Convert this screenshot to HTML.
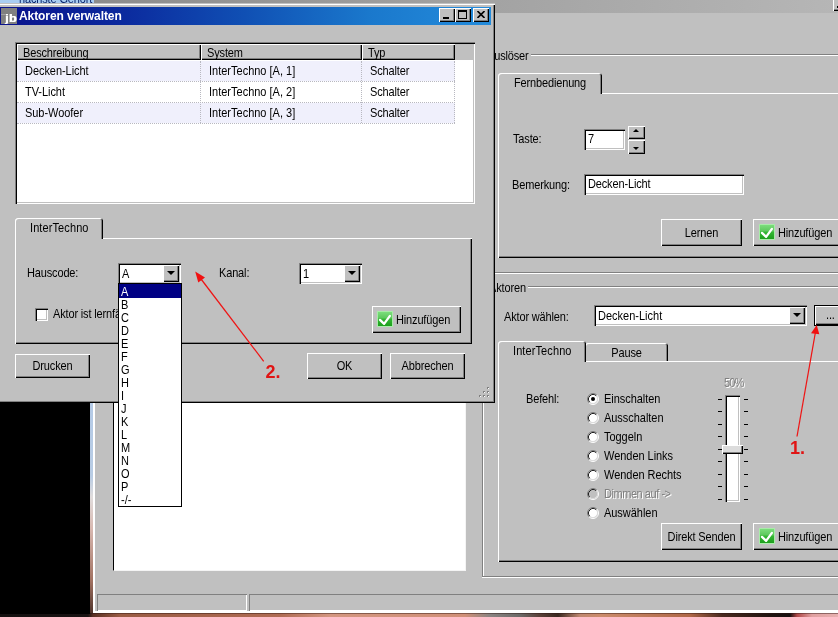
<!DOCTYPE html>
<html lang="de">
<head>
<meta charset="utf-8">
<title>Aktoren verwalten</title>
<style>
html,body{margin:0;padding:0}
body{width:838px;height:617px;position:relative;overflow:hidden;background:#c0c0c0;
 font-family:"Liberation Sans",sans-serif;font-size:11px;color:#000;line-height:13px}
#root{will-change:transform;position:absolute;left:0;top:0;width:838px;height:617px;overflow:hidden;background:#c0c0c0}
.a{position:absolute;box-sizing:border-box}
.t{position:absolute;white-space:nowrap;line-height:13px;height:13px;letter-spacing:-0.15px;transform:scaleY(1.12);transform-origin:0 2.4px}
.btn{position:absolute;box-sizing:border-box;background:#c0c0c0;
 box-shadow:inset 1px 1px 0 #fff,inset -1px -1px 0 #000,inset -2px -2px 0 #808080;}
.btn .t{left:0;right:0;text-align:center}
.sunk{position:absolute;box-sizing:border-box;background:#fff;
 box-shadow:inset 1px 1px 0 #808080,inset 2px 2px 0 #000,inset -1px -1px 0 #fff,inset -2px -2px 0 #c0c0c0;}
.hl{position:absolute;height:2px;border-top:1px solid #808080;border-bottom:1px solid #fff;box-sizing:border-box}
.vl{position:absolute;width:2px;border-left:1px solid #808080;border-right:1px solid #fff;box-sizing:border-box}
.dis{color:#808080;text-shadow:1px 1px 0 #fff}
.rad{position:absolute;box-sizing:border-box;width:12px;height:12px;border-radius:50%;background:#fff;
 border:1px solid;border-color:#808080 #fff #fff #808080;box-shadow:inset 1px 1px 0 #000}
.rad.d{background:#c0c0c0}
.dot{position:absolute;left:3px;top:3px;width:4px;height:4px;border-radius:50%;background:#000}
.tick{position:absolute;height:1px;width:4px;background:#000}
.arr{position:absolute;width:0;height:0;border-left:4px solid transparent;border-right:4px solid transparent;border-top:4px solid #000}
.arrup{position:absolute;width:0;height:0;border-left:3px solid transparent;border-right:3px solid transparent;border-bottom:3px solid #000}
.arrdn{position:absolute;width:0;height:0;border-left:3px solid transparent;border-right:3px solid transparent;border-top:3px solid #000}
.chk{position:absolute;width:16px;height:16px}
.tab{position:absolute;box-sizing:border-box;background:#c0c0c0;border-radius:3px 3px 0 0;
 box-shadow:inset 1px 1px 0 #fff,inset -1px 0 0 #000,inset -2px 0 0 #808080}
.li{position:absolute;left:0;right:0;height:13px;line-height:13px;padding-left:2px;font-size:11px}
.li span{display:inline-block;transform:scaleY(1.12);transform-origin:0 2.4px}
</style>
</head>
<body>
<div id="root">

<!-- ===== background main window ===== -->
<div class="a" id="bgtitle" style="left:94px;top:0;width:744px;height:13px;background:linear-gradient(90deg,#8c8c8c 0%,#a3a3a3 54%,#adadad 78%,#b6b6b6 100%)"></div>
<div class="a" style="left:0;top:0;width:94px;height:3px;background:#a9cdf1;overflow:hidden">
  <div class="t" style="left:19px;top:-8px;font-size:11px;color:#0a246a">nächste Gehört</div>
</div>
<div class="btn" style="left:833px;top:-3px;width:16px;height:14px"><div class="a" style="left:4px;top:9px;width:6px;height:2px;background:#000"></div></div>

<!-- group Auslöser -->
<div class="hl" style="left:482px;top:54px;width:360px"></div>
<div class="t" style="left:486px;top:49px;background:#c0c0c0;padding:0 2px 0 1px">Auslöser</div>
<div class="hl" style="left:482px;top:272px;width:360px"></div>

<!-- Tab Fernbedienung -->
<div class="a" style="left:498px;top:93px;width:350px;height:165px;background:#c0c0c0;box-shadow:inset 1px 1px 0 #fff,inset 0 -1px 0 #000,inset 0 -2px 0 #808080"></div>
<div class="tab" style="left:498px;top:73px;width:104px;height:21px"><div class="t" style="left:16px;top:3px">Fernbedienung</div></div>

<div class="t" style="left:513px;top:132px">Taste:</div>
<div class="sunk" style="left:584px;top:129px;width:41px;height:21px"><div class="t" style="left:4px;top:3px">7</div></div>
<div class="btn" style="left:628px;top:126px;width:17px;height:13px"><div class="arrup" style="left:5px;top:3px"></div></div>
<div class="btn" style="left:628px;top:140px;width:17px;height:14px"><div class="arrdn" style="left:5px;top:7px"></div></div>

<div class="t" style="left:512px;top:178px">Bemerkung:</div>
<div class="sunk" style="left:584px;top:174px;width:160px;height:21px"><div class="t" style="left:4px;top:3px">Decken-Licht</div></div>

<div class="btn" style="left:661px;top:219px;width:81px;height:27px"><div class="t" style="top:7px">Lernen</div></div>
<div class="btn" style="left:753px;top:219px;width:90px;height:27px">
  <svg class="chk" style="left:6px;top:5px" viewBox="0 0 16 16"><rect x="0.5" y="0.5" width="15" height="15" fill="url(#gg)" stroke="#a8eca8"/><rect x="1" y="1" width="14" height="6.5" fill="#fff" opacity="0.18"/><path d="M3 8.9 L7.1 12.9 L12.9 4.9" fill="none" stroke="#fff" stroke-width="2.3" stroke-linecap="round" stroke-linejoin="round"/></svg>
  <div class="t" style="left:25px;top:7px;text-align:left">Hinzufügen</div></div>

<!-- group Aktoren -->
<div class="hl" style="left:482px;top:286px;width:360px"></div>
<div class="vl" style="left:482px;top:286px;height:291px"></div>
<div class="t" style="left:488px;top:281px;background:#c0c0c0;padding:0 2px 0 1px">Aktoren</div>
<div class="hl" style="left:482px;top:576px;width:360px"></div>

<div class="t" style="left:504px;top:310px">Aktor wählen:</div>
<div class="sunk" style="left:594px;top:305px;width:213px;height:21px"><div class="t" style="left:4px;top:4px;letter-spacing:0">Decken-Licht</div>
  <div class="btn" style="left:195px;top:2px;width:16px;height:17px"><div class="arr" style="left:4px;top:6px"></div></div></div>
<div class="a" style="left:814px;top:305px;width:30px;height:21px;background:#000"></div>
<div class="btn" style="left:815px;top:306px;width:30px;height:19px"><div class="t" style="left:11px;top:2px;text-align:left">...</div></div>

<!-- Tab InterTechno / Pause (right) -->
<div class="a" style="left:498px;top:361px;width:350px;height:201px;background:#c0c0c0;box-shadow:inset 1px 1px 0 #fff,inset 0 -1px 0 #000,inset 0 -2px 0 #808080"></div>
<div class="tab" style="left:585px;top:343px;width:83px;height:18px"><div class="t" style="top:3px;left:0;right:0;text-align:center">Pause</div></div>
<div class="tab" style="left:498px;top:341px;width:88px;height:21px"><div class="t" style="left:15px;top:3px;letter-spacing:0.1px">InterTechno</div></div>

<div class="t" style="left:526px;top:392px">Befehl:</div>
<svg class="a" style="left:587px;top:393px" width="12" height="12" viewBox="0 0 12 12"><circle cx="6" cy="6" r="4.6" fill="#fff"/><path d="M2.11 9.89 A5.5 5.5 0 0 1 9.89 2.11" stroke="#808080" fill="none"/><path d="M2.82 9.18 A4.5 4.5 0 0 1 9.18 2.82" stroke="#202020" fill="none"/><path d="M9.89 2.11 A5.5 5.5 0 0 1 2.11 9.89" stroke="#fff" fill="none"/><path d="M9.18 2.82 A4.5 4.5 0 0 1 2.82 9.18" stroke="#dcdcdc" fill="none"/><circle cx="6" cy="6" r="2" fill="#000"/></svg><div class="t" style="left:604px;top:392px;letter-spacing:-0.04px">Einschalten</div>
<svg class="a" style="left:587px;top:412px" width="12" height="12" viewBox="0 0 12 12"><circle cx="6" cy="6" r="4.6" fill="#fff"/><path d="M2.11 9.89 A5.5 5.5 0 0 1 9.89 2.11" stroke="#808080" fill="none"/><path d="M2.82 9.18 A4.5 4.5 0 0 1 9.18 2.82" stroke="#202020" fill="none"/><path d="M9.89 2.11 A5.5 5.5 0 0 1 2.11 9.89" stroke="#fff" fill="none"/><path d="M9.18 2.82 A4.5 4.5 0 0 1 2.82 9.18" stroke="#dcdcdc" fill="none"/></svg><div class="t" style="left:604px;top:411px;letter-spacing:-0.04px">Ausschalten</div>
<svg class="a" style="left:587px;top:431px" width="12" height="12" viewBox="0 0 12 12"><circle cx="6" cy="6" r="4.6" fill="#fff"/><path d="M2.11 9.89 A5.5 5.5 0 0 1 9.89 2.11" stroke="#808080" fill="none"/><path d="M2.82 9.18 A4.5 4.5 0 0 1 9.18 2.82" stroke="#202020" fill="none"/><path d="M9.89 2.11 A5.5 5.5 0 0 1 2.11 9.89" stroke="#fff" fill="none"/><path d="M9.18 2.82 A4.5 4.5 0 0 1 2.82 9.18" stroke="#dcdcdc" fill="none"/></svg><div class="t" style="left:604px;top:430px;letter-spacing:-0.04px">Toggeln</div>
<svg class="a" style="left:587px;top:450px" width="12" height="12" viewBox="0 0 12 12"><circle cx="6" cy="6" r="4.6" fill="#fff"/><path d="M2.11 9.89 A5.5 5.5 0 0 1 9.89 2.11" stroke="#808080" fill="none"/><path d="M2.82 9.18 A4.5 4.5 0 0 1 9.18 2.82" stroke="#202020" fill="none"/><path d="M9.89 2.11 A5.5 5.5 0 0 1 2.11 9.89" stroke="#fff" fill="none"/><path d="M9.18 2.82 A4.5 4.5 0 0 1 2.82 9.18" stroke="#dcdcdc" fill="none"/></svg><div class="t" style="left:604px;top:449px;letter-spacing:-0.04px">Wenden Links</div>
<svg class="a" style="left:587px;top:469px" width="12" height="12" viewBox="0 0 12 12"><circle cx="6" cy="6" r="4.6" fill="#fff"/><path d="M2.11 9.89 A5.5 5.5 0 0 1 9.89 2.11" stroke="#808080" fill="none"/><path d="M2.82 9.18 A4.5 4.5 0 0 1 9.18 2.82" stroke="#202020" fill="none"/><path d="M9.89 2.11 A5.5 5.5 0 0 1 2.11 9.89" stroke="#fff" fill="none"/><path d="M9.18 2.82 A4.5 4.5 0 0 1 2.82 9.18" stroke="#dcdcdc" fill="none"/></svg><div class="t" style="left:604px;top:468px;letter-spacing:-0.04px">Wenden Rechts</div>
<svg class="a" style="left:587px;top:488px" width="12" height="12" viewBox="0 0 12 12"><circle cx="6" cy="6" r="4.6" fill="#c0c0c0"/><path d="M2.11 9.89 A5.5 5.5 0 0 1 9.89 2.11" stroke="#808080" fill="none"/><path d="M2.82 9.18 A4.5 4.5 0 0 1 9.18 2.82" stroke="#202020" fill="none"/><path d="M9.89 2.11 A5.5 5.5 0 0 1 2.11 9.89" stroke="#fff" fill="none"/><path d="M9.18 2.82 A4.5 4.5 0 0 1 2.82 9.18" stroke="#dcdcdc" fill="none"/></svg><div class="t dis" style="left:604px;top:487px;letter-spacing:-0.45px">Dimmen auf -&gt;</div>
<svg class="a" style="left:587px;top:507px" width="12" height="12" viewBox="0 0 12 12"><circle cx="6" cy="6" r="4.6" fill="#fff"/><path d="M2.11 9.89 A5.5 5.5 0 0 1 9.89 2.11" stroke="#808080" fill="none"/><path d="M2.82 9.18 A4.5 4.5 0 0 1 9.18 2.82" stroke="#202020" fill="none"/><path d="M9.89 2.11 A5.5 5.5 0 0 1 2.11 9.89" stroke="#fff" fill="none"/><path d="M9.18 2.82 A4.5 4.5 0 0 1 2.82 9.18" stroke="#dcdcdc" fill="none"/></svg><div class="t" style="left:604px;top:506px;letter-spacing:-0.04px">Auswählen</div>

<div class="t dis" style="left:724px;top:376px;letter-spacing:-0.9px">50%</div>
<div class="sunk" style="left:725px;top:395px;width:15px;height:107px"></div>
<div class="btn" style="left:722px;top:445px;width:21px;height:9px;background:#dcdcdc"></div>
<div class="tick" style="left:718px;top:399px"></div><div class="tick" style="left:744px;top:399px"></div><div class="tick" style="left:718px;top:411px"></div><div class="tick" style="left:744px;top:411px"></div><div class="tick" style="left:718px;top:424px"></div><div class="tick" style="left:744px;top:424px"></div><div class="tick" style="left:718px;top:436px"></div><div class="tick" style="left:744px;top:436px"></div><div class="tick" style="left:718px;top:449px"></div><div class="tick" style="left:744px;top:449px"></div><div class="tick" style="left:718px;top:461px"></div><div class="tick" style="left:744px;top:461px"></div><div class="tick" style="left:718px;top:474px"></div><div class="tick" style="left:744px;top:474px"></div><div class="tick" style="left:718px;top:486px"></div><div class="tick" style="left:744px;top:486px"></div><div class="tick" style="left:718px;top:499px"></div><div class="tick" style="left:744px;top:499px"></div>

<div class="btn" style="left:661px;top:523px;width:81px;height:27px"><div class="t" style="top:7px">Direkt Senden</div></div>
<div class="btn" style="left:753px;top:523px;width:90px;height:27px">
  <svg class="chk" style="left:6px;top:5px" viewBox="0 0 16 16"><rect x="0.5" y="0.5" width="15" height="15" fill="url(#gg)" stroke="#a8eca8"/><rect x="1" y="1" width="14" height="6.5" fill="#fff" opacity="0.18"/><path d="M3 8.9 L7.1 12.9 L12.9 4.9" fill="none" stroke="#fff" stroke-width="2.3" stroke-linecap="round" stroke-linejoin="round"/></svg>
  <div class="t" style="left:25px;top:7px;text-align:left">Hinzufügen</div></div>

<!-- left white client area, status bar, bottom -->
<div class="a" style="left:113px;top:380px;width:353px;height:191px;background:#fff;border-left:1px solid #000;border-right:1px solid #f4f4f4;border-bottom:1px solid #f4f4f4"></div>
<div class="a" style="left:97px;top:594px;width:150px;height:17px;box-shadow:inset 1px 1px 0 #808080,inset -1px -1px 0 #fff"></div>
<div class="a" style="left:249px;top:594px;width:600px;height:17px;box-shadow:inset 1px 1px 0 #808080,inset -1px -1px 0 #fff"></div>
<div class="a" style="left:93px;top:611px;width:745px;height:2px;background:#fff"></div>
<div class="a" style="left:0;top:613px;width:838px;height:4px;background:linear-gradient(90deg,#141010 0px,#181212 88px,#5a3024 93px,#9a5c44 120px,#b06c54 280px,#d49680 330px,#d09078 465px,#8a8482 490px,#6c6a68 520px,#5a4038 540px,#3a2820 558px,#c08870 580px,#cc8c6c 600px,#b06848 690px,#4a2a20 722px,#201410 770px,#181010 790px,#b04848 797px,#e0a0a0 812px,#e8b0b0 838px)"></div><div class="a" style="left:90px;top:613px;width:748px;height:1px;background:rgba(40,20,16,0.45)"></div>
<div class="a" style="left:0;top:402px;width:90px;height:212px;background:#000"></div>
<div class="a" style="left:90px;top:402px;width:4px;height:211px;background:linear-gradient(180deg,#b4cae6 0%,#b8cce4 35%,#e0dcdc 45%,#d8b8b0 60%,#a07060 85%,#50342c 100%)"></div>
<div class="a" style="left:93px;top:402px;width:2px;height:211px;background:#fff"></div>

<!-- ===== dialog ===== -->
<div class="a" id="dlg" style="left:-3px;top:3px;width:498px;height:400px;background:#c0c0c0;box-shadow:inset 1px 1px 0 #c0c0c0,inset 2px 2px 0 #fff,inset -1px -1px 0 #000,inset -2px -2px 0 #808080"></div>
<div class="a" id="ttl" style="left:0;top:7px;width:491px;height:18px;background:linear-gradient(90deg,#0a128c 0%,#0b2a9e 25%,#1050b4 50%,#1a78cc 75%,#248cdc 100%)"></div>
<div class="a" style="left:1px;top:8px;width:16px;height:16px;background:#808080;overflow:hidden"><div class="t" style="left:4px;top:3.5px;font-size:10.5px;font-weight:bold;color:#fff;letter-spacing:0.2px;transform:scaleX(1.22);transform-origin:0 0;text-shadow:0.3px 0 0 #fff">jb</div><div class="a" style="left:0;top:6px;width:5px;height:1px;background:#a0a0a0"></div></div>
<div class="t" style="left:19px;top:10px;font-weight:bold;color:#fff;font-size:12px;letter-spacing:-0.08px;transform:none">Aktoren verwalten</div>
<div class="btn" style="left:439px;top:8px;width:16px;height:14px"><div class="a" style="left:4px;top:9px;width:6px;height:2px;background:#000"></div></div>
<div class="btn" style="left:455px;top:8px;width:16px;height:14px"><div class="a" style="left:3px;top:2px;width:9px;height:9px;border:1px solid #000;border-top-width:2px"></div></div>
<div class="btn" style="left:473px;top:8px;width:16px;height:14px"><svg class="a" style="left:4px;top:3px" width="8" height="7" viewBox="0 0 8 7"><path d="M0.5 0 L7.5 7 M7.5 0 L0.5 7" stroke="#000" stroke-width="1.6" fill="none"/></svg></div>

<!-- list view -->
<div class="sunk" style="left:15px;top:42px;width:460px;height:162px"></div>
<div class="a" style="left:17px;top:44px;width:456px;height:16px;background:#c0c0c0"></div>
<div class="btn" style="left:17px;top:44px;width:184px;height:16px"><div class="t" style="left:6px;top:2px;text-align:left">Beschreibung</div></div>
<div class="btn" style="left:201px;top:44px;width:161px;height:16px"><div class="t" style="left:6px;top:2px;text-align:left">System</div></div>
<div class="btn" style="left:362px;top:44px;width:93px;height:16px"><div class="t" style="left:6px;top:2px;text-align:left">Typ</div></div>
<div class="a" style="left:17px;top:61px;width:438px;height:20px;background:#f0f0fc"></div>
<div class="a" style="left:17px;top:103px;width:438px;height:20px;background:#f0f0fc"></div>
<div class="a" style="left:17px;top:81px;width:438px;height:0;border-top:1px dotted #b8b8c0"></div>
<div class="a" style="left:17px;top:102px;width:438px;height:0;border-top:1px dotted #b8b8c0"></div>
<div class="a" style="left:17px;top:123px;width:438px;height:0;border-top:1px dotted #b8b8c0"></div>
<div class="a" style="left:200px;top:61px;width:0;height:62px;border-left:1px dotted #b8b8c0"></div>
<div class="a" style="left:361px;top:61px;width:0;height:62px;border-left:1px dotted #b8b8c0"></div>
<div class="a" style="left:454px;top:61px;width:0;height:62px;border-left:1px dotted #b8b8c0"></div>
<div class="t" style="left:25px;top:64px;letter-spacing:-0.05px">Decken-Licht</div><div class="t" style="left:209px;top:64px;letter-spacing:0">InterTechno [A, 1]</div><div class="t" style="left:370px;top:64px">Schalter</div>
<div class="t" style="left:25px;top:85px;letter-spacing:-0.05px">TV-Licht</div><div class="t" style="left:209px;top:85px;letter-spacing:0">InterTechno [A, 2]</div><div class="t" style="left:370px;top:85px">Schalter</div>
<div class="t" style="left:25px;top:106px;letter-spacing:-0.05px">Sub-Woofer</div><div class="t" style="left:209px;top:106px;letter-spacing:0">InterTechno [A, 3]</div><div class="t" style="left:370px;top:106px">Schalter</div>

<!-- tab InterTechno (dialog) -->
<div class="a" style="left:15px;top:238px;width:457px;height:106px;background:#c0c0c0;box-shadow:inset 1px 1px 0 #fff,inset -1px -1px 0 #000,inset -2px -2px 0 #808080"></div>
<div class="tab" style="left:15px;top:218px;width:88px;height:21px"><div class="t" style="left:15px;top:3px;letter-spacing:0.1px">InterTechno</div></div>
<div class="t" style="left:27px;top:266px">Hauscode:</div>
<div class="sunk" style="left:118px;top:263px;width:63px;height:21px"><div class="t" style="left:4px;top:4px">A</div>
  <div class="btn" style="left:45px;top:2px;width:16px;height:17px"><div class="arr" style="left:4px;top:6px"></div></div></div>
<div class="t" style="left:219px;top:266px">Kanal:</div>
<div class="sunk" style="left:299px;top:263px;width:63px;height:21px"><div class="t" style="left:4px;top:4px">1</div>
  <div class="btn" style="left:45px;top:2px;width:16px;height:17px"><div class="arr" style="left:4px;top:6px"></div></div></div>
<div class="sunk" style="left:35px;top:308px;width:13px;height:13px"></div>
<div class="t" style="left:53px;top:307px">Aktor ist lernfähig</div>
<div class="btn" style="left:372px;top:306px;width:89px;height:27px">
  <svg class="chk" style="left:5px;top:5px" viewBox="0 0 16 16"><rect x="0.5" y="0.5" width="15" height="15" fill="url(#gg)" stroke="#a8eca8"/><rect x="1" y="1" width="14" height="6.5" fill="#fff" opacity="0.18"/><path d="M3 8.9 L7.1 12.9 L12.9 4.9" fill="none" stroke="#fff" stroke-width="2.3" stroke-linecap="round" stroke-linejoin="round"/></svg>
  <div class="t" style="left:24px;top:7px;text-align:left">Hinzufügen</div></div>
<div class="btn" style="left:15px;top:354px;width:75px;height:24px"><div class="t" style="top:5px">Drucken</div></div>
<div class="btn" style="left:307px;top:353px;width:75px;height:26px"><div class="t" style="top:6px">OK</div></div>
<div class="btn" style="left:390px;top:353px;width:75px;height:26px"><div class="t" style="top:6px">Abbrechen</div></div>
<svg class="a" style="left:478px;top:386px" width="12" height="12" viewBox="0 0 12 12"><g fill="#808080"><rect x="9" y="1" width="2" height="2"/><rect x="5" y="5" width="2" height="2"/><rect x="9" y="5" width="2" height="2"/><rect x="1" y="9" width="2" height="2"/><rect x="5" y="9" width="2" height="2"/><rect x="9" y="9" width="2" height="2"/></g><g fill="#fff"><rect x="10" y="2" width="1" height="1"/><rect x="6" y="6" width="1" height="1"/><rect x="10" y="6" width="1" height="1"/><rect x="2" y="10" width="1" height="1"/><rect x="6" y="10" width="1" height="1"/><rect x="10" y="10" width="1" height="1"/></g></svg>

<!-- dropdown list -->
<div class="a" style="left:118px;top:283px;width:64px;height:224px;background:#fff;border:1px solid #000"><div class="li" style="top:0;padding-top:1px;background:#000084;color:#fff"><span>A</span></div><div class="li" style="top:14px"><span>B</span></div><div class="li" style="top:27px"><span>C</span></div><div class="li" style="top:40px"><span>D</span></div><div class="li" style="top:53px"><span>E</span></div><div class="li" style="top:66px"><span>F</span></div><div class="li" style="top:79px"><span>G</span></div><div class="li" style="top:92px"><span>H</span></div><div class="li" style="top:105px"><span>I</span></div><div class="li" style="top:118px"><span>J</span></div><div class="li" style="top:131px"><span>K</span></div><div class="li" style="top:144px"><span>L</span></div><div class="li" style="top:157px"><span>M</span></div><div class="li" style="top:170px"><span>N</span></div><div class="li" style="top:183px"><span>O</span></div><div class="li" style="top:196px"><span>P</span></div><div class="li" style="top:209px"><span>-/-</span></div></div>

<!-- red annotations -->
<svg class="a" style="left:0;top:0" width="838" height="617" viewBox="0 0 838 617">
<g stroke="#ee1414" stroke-width="1.25" fill="none"><path d="M263.7 361.3 L201 279"/><path d="M797 436.5 L815.3 333"/></g>
<g fill="#f01010"><path d="M195.2 271.6 L205 277.4 L198.3 282.6 Z"/><path d="M816.7 325 L819.3 334.3 L811 333.2 Z"/></g>
<text x="265.5" y="377.8" fill="#e01414" font-family="Liberation Sans, sans-serif" font-weight="bold" font-size="18">2.</text>
<text x="790" y="453.7" fill="#e01414" font-family="Liberation Sans, sans-serif" font-weight="bold" font-size="18">1.</text>
</svg>
</div>
<svg width="0" height="0" style="position:absolute">
<defs>
<linearGradient id="gg" x1="0" y1="0" x2="0" y2="1"><stop offset="0" stop-color="#62d862"/><stop offset="0.5" stop-color="#34b834"/><stop offset="1" stop-color="#1c9c1c"/></linearGradient>

</defs>
</svg>
</body>
</html>
